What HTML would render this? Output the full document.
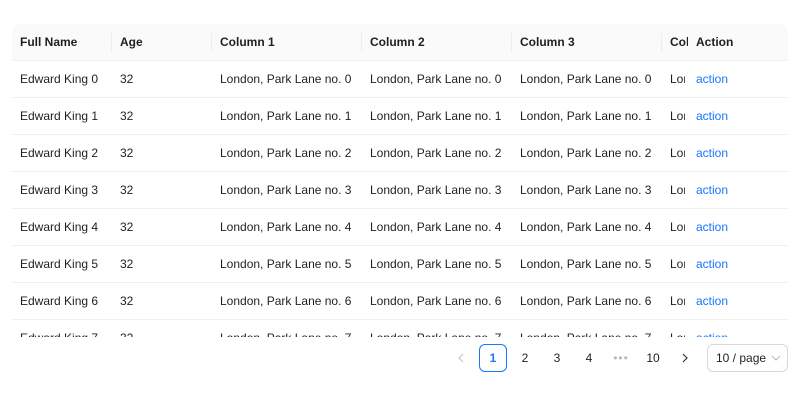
<!DOCTYPE html>
<html><head><style>
body{margin:0;width:800px;height:404px;background:#fff;font-family:"Liberation Sans",sans-serif;font-size:12px;color:rgba(0,0,0,.88);position:relative;overflow:hidden}
.wrap{position:absolute;left:12px;top:24px;width:776px;height:313px;overflow:hidden;border-radius:8px 8px 0 0}
table{border-collapse:collapse;table-layout:fixed;width:776px}
td,th{padding:0 8px;height:36px;white-space:nowrap;overflow:hidden;text-align:left;border-bottom:1px solid #f0f0f0}
th{background:#fafafa;font-weight:bold;position:relative}
th.s::after{content:"";position:absolute;right:0;top:9px;height:18px;width:1px;background:#ececec}
td.c4,th.c4{padding-right:0}
.c4 span{display:inline-block;width:15px;overflow:hidden;vertical-align:middle}
th.c4 span{width:19px}
a{color:#1677ff;text-decoration:none}
.pg{position:absolute;top:344px;height:28px;line-height:28px;text-align:center;font-size:12px}
.pg svg{position:absolute;left:50%;top:50%;transform:translate(-50%,-50%)}
</style></head><body>
<div class="wrap"><table>
<colgroup><col style="width:100px"><col style="width:100px"><col style="width:150px"><col style="width:150px"><col style="width:150px"><col style="width:26px"><col style="width:100px"></colgroup>
<tr><th class="s">Full Name</th><th class="s">Age</th><th class="s">Column 1</th><th class="s">Column 2</th><th class="s">Column 3</th><th class="c4"><span>Column 4</span></th><th>Action</th></tr>
<tr><td>Edward King 0</td><td>32</td><td>London, Park Lane no. 0</td><td>London, Park Lane no. 0</td><td>London, Park Lane no. 0</td><td class="c4"><span>London</span></td><td><a>action</a></td></tr>
<tr><td>Edward King 1</td><td>32</td><td>London, Park Lane no. 1</td><td>London, Park Lane no. 1</td><td>London, Park Lane no. 1</td><td class="c4"><span>London</span></td><td><a>action</a></td></tr>
<tr><td>Edward King 2</td><td>32</td><td>London, Park Lane no. 2</td><td>London, Park Lane no. 2</td><td>London, Park Lane no. 2</td><td class="c4"><span>London</span></td><td><a>action</a></td></tr>
<tr><td>Edward King 3</td><td>32</td><td>London, Park Lane no. 3</td><td>London, Park Lane no. 3</td><td>London, Park Lane no. 3</td><td class="c4"><span>London</span></td><td><a>action</a></td></tr>
<tr><td>Edward King 4</td><td>32</td><td>London, Park Lane no. 4</td><td>London, Park Lane no. 4</td><td>London, Park Lane no. 4</td><td class="c4"><span>London</span></td><td><a>action</a></td></tr>
<tr><td>Edward King 5</td><td>32</td><td>London, Park Lane no. 5</td><td>London, Park Lane no. 5</td><td>London, Park Lane no. 5</td><td class="c4"><span>London</span></td><td><a>action</a></td></tr>
<tr><td>Edward King 6</td><td>32</td><td>London, Park Lane no. 6</td><td>London, Park Lane no. 6</td><td>London, Park Lane no. 6</td><td class="c4"><span>London</span></td><td><a>action</a></td></tr>
<tr><td>Edward King 7</td><td>32</td><td>London, Park Lane no. 7</td><td>London, Park Lane no. 7</td><td>London, Park Lane no. 7</td><td class="c4"><span>London</span></td><td><a>action</a></td></tr>
</table></div>
<div class="pg" style="left:447px;width:28px"><svg width="6" height="10" viewBox="0 0 6 10"><path d="M5 1L1 5l4 4" fill="none" stroke="#c4c4c4" stroke-width="1.2"/></svg></div>
<div class="pg" style="left:479px;width:26px;height:26px;line-height:26px;border:1px solid #1677ff;border-radius:6px;color:#1677ff;font-weight:bold">1</div>
<div class="pg" style="left:511px;width:28px">2</div>
<div class="pg" style="left:543px;width:28px">3</div>
<div class="pg" style="left:575px;width:28px">4</div>
<div class="pg" style="left:607px;width:28px;color:#bbb;letter-spacing:1px">•••</div>
<div class="pg" style="left:639px;width:28px">10</div>
<div class="pg" style="left:671px;width:28px"><svg width="6" height="10" viewBox="0 0 6 10"><path d="M1 1l4 4-4 4" fill="none" stroke="#333" stroke-width="1.2"/></svg></div>
<div class="pg" style="left:707px;width:79px;height:26px;line-height:26px;border:1px solid #d9d9d9;border-radius:6px;text-align:left"><span style="margin-left:8px">10 / page</span><svg width="10" height="6" viewBox="0 0 10 6" style="position:absolute;left:auto;right:6px;top:10px;transform:none"><path d="M1 1l4 4 4-4" fill="none" stroke="#bbb" stroke-width="1.1"/></svg></div>
</body></html>
